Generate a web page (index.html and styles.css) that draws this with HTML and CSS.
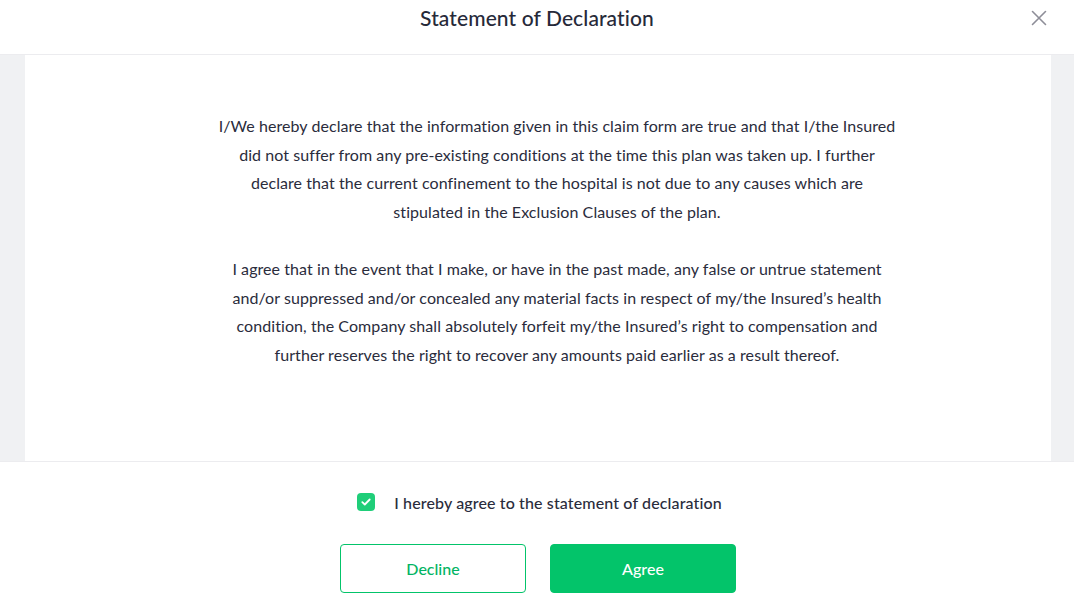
FILE: index.html
```html
<!DOCTYPE html>
<html lang="en">
<head>
<meta charset="utf-8">
<title>Statement of Declaration</title>
<link rel="stylesheet" href="styles.css">
</head>
<body>
<div class="modal">
  <header class="modal-header">
    <h1 class="modal-title">Statement of Declaration</h1>
    <button class="close-btn" aria-label="Close">
      <svg width="16" height="16" viewBox="0 0 16 16"><path d="M1.5 1.5 L14.5 14.5 M14.5 1.5 L1.5 14.5" stroke="#8e8e98" stroke-width="1.6" fill="none" stroke-linecap="round"/></svg>
    </button>
  </header>
  <main class="modal-body">
    <div class="sheet">
      <div class="declaration">
        <p>I/We hereby declare that the information given in this claim form are true and that I/the Insured did not suffer from any pre-existing conditions at the time this plan was taken up. I further declare that the current confinement to the hospital is not due to any causes which are stipulated in the Exclusion Clauses of the plan.</p>
        <p>I agree that in the event that I make, or have in the past made, any false or untrue statement and/or suppressed and/or concealed any material facts in respect of my/the Insured’s health condition, the Company shall absolutely forfeit my/the Insured’s right to compensation and further reserves the right to recover any amounts paid earlier as a result thereof.</p>
      </div>
    </div>
  </main>
  <footer class="modal-footer">
    <label class="agree-row">
      <span class="checkbox">
        <svg width="10" height="8" viewBox="0 0 10 8"><path d="M1.3 4.2 L3.8 6.5 L8.7 1.5" stroke="#fff" stroke-width="1.8" fill="none" stroke-linecap="round" stroke-linejoin="round"/></svg>
      </span>
      <span class="agree-text">I hereby agree to the statement of declaration</span>
    </label>
    <div class="actions">
      <button class="btn btn-outline">Decline</button>
      <button class="btn btn-solid">Agree</button>
    </div>
  </footer>
</div>
</body>
</html>
```
FILE: styles.css
```css
* { box-sizing: border-box; }
html, body { margin: 0; padding: 0; }
body {
  font-family: Lato, "Noto Sans", sans-serif;
  color: #2a2c3c;
  background: #fff;
  width: 1074px;
  height: 608px;
  overflow: hidden;
}
.modal {
  display: flex;
  flex-direction: column;
  height: 608px;
}
.modal-header {
  position: relative;
  height: 55px;
  border-bottom: 1px solid #ececef;
  display: flex;
  align-items: center;
  justify-content: center;
  padding-bottom: 18px;
}
.modal-title {
  margin: 0;
  font-size: 21px;
  font-weight: 500;
  color: #262939;
  line-height: 36px;
  letter-spacing: 0.1px;
}
.close-btn {
  position: absolute;
  right: 27px;
  top: 10px;
  width: 16px;
  height: 16px;
  padding: 0;
  border: 0;
  background: none;
  display: flex;
}
.modal-body {
  height: 407px;
  background: #f0f1f3;
  padding: 0 23px 0 25px;
  border-bottom: 1px solid #ececef;
}
.sheet {
  background: #fff;
  height: 100%;
  padding: 57px 0 0 38px;
}
.declaration {
  width: 682px;
  margin: 0 auto;
  text-align: center;
  font-size: 16px;
  line-height: 28.6px;
  letter-spacing: 0.07px;
  color: #2a2c3c;
}
.declaration p { margin: 0 0 28.6px; }
.modal-footer {
  flex: 1;
  display: flex;
  flex-direction: column;
  align-items: center;
  padding-top: 31px;
  padding-left: 2px;
}
.agree-row {
  display: flex;
  align-items: center;
  gap: 19px;
  height: 18px;
  margin-left: 3px;
}
.checkbox {
  width: 18px;
  height: 18px;
  border-radius: 4px;
  background: #1fce79;
  display: flex;
  align-items: center;
  justify-content: center;
}
.agree-text {
  font-size: 16px;
  font-weight: 500;
  letter-spacing: 0.13px;
  color: #2a2c3c;
}
.actions {
  display: flex;
  gap: 24px;
  margin-top: 33px;
}
.btn {
  width: 186px;
  height: 49px;
  border-radius: 4px;
  font-family: Lato, "Noto Sans", sans-serif;
  font-size: 16px;
  font-weight: 500;
  cursor: pointer;
}
.btn-outline {
  background: #fff;
  border: 1px solid #03c46a;
  color: #03b463;
}
.btn-solid {
  background: #03c46a;
  border: 1px solid #03c46a;
  color: #fff;
}
```
